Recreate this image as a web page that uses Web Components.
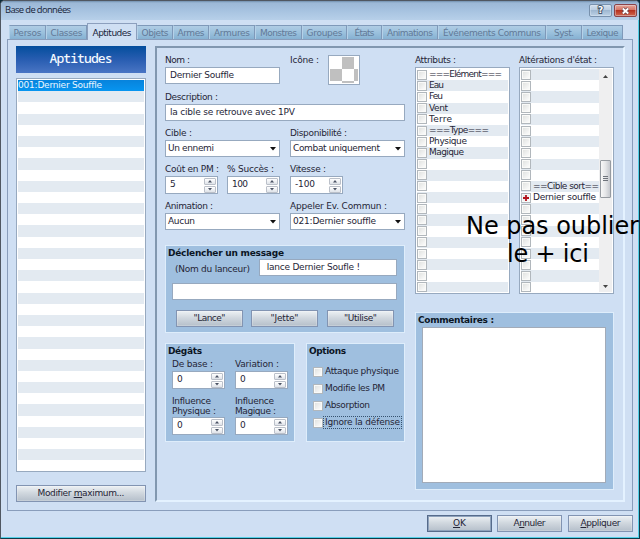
<!DOCTYPE html>
<html lang="fr"><head><meta charset="utf-8"><title>Base de données</title>
<style>
html,body{margin:0;width:640px;height:539px;overflow:hidden;background:#0d2c3b}
body{font:9px "DejaVu Sans",sans-serif;color:#252536}
</style></head><body><db-window></db-window>
<script>
const define=(name,css,html,setup)=>customElements.define(name,class extends HTMLElement{
  connectedCallback(){
    if(this.shadowRoot)return;
    const r=this.attachShadow({mode:'open'});
    r.innerHTML=`<style>*{box-sizing:border-box}:host{display:block;box-sizing:border-box}${css}</style>${typeof html==='function'?html(this):html}`;
    if(setup)setup(this,r);
  }
});
// Text run spaced to a given width.
define('ui-text',`:host{display:inline-block;white-space:pre;flex:none}span{display:inline-block}`,
 e=>`<span>${e.innerHTML}</span>`,(e,r)=>{
  const s=r.querySelector('span'),w=+e.getAttribute('w');
  if(w){const n=e.textContent.length;s.style.letterSpacing=((w-s.getBoundingClientRect().width)/(n-1||1))+'px';
    e.style.width=w+'px';}
});
const T=(t,w)=>`<ui-text w="${w}">${t}</ui-text>`;
define('ui-label',`:host{height:14px;line-height:14px;white-space:nowrap}`,e=>T(e.getAttribute('t'),e.getAttribute('w')));
define('ui-input',`:host{height:17px;border:1px solid #97a9bf;background:#fff;padding-left:4px;line-height:15px;white-space:nowrap;overflow:hidden}`,
 e=>e.hasAttribute('t')?T(e.getAttribute('t'),e.getAttribute('w')):'');
define('ui-select',`:host{display:flex;height:17px;border:1px solid #97a9bf;background:#fff;padding:0 3px 0 2px;justify-content:space-between;align-items:center;line-height:15px}svg{display:block;margin-top:1px}`,
 e=>T(e.getAttribute('t'),e.getAttribute('w'))+'<svg width="6" height="4"><path d="M0 0H6L3 3.5Z" fill="#111"/></svg>');
define('ui-spin',`:host{display:flex;width:53px;height:18px;border:1px solid #97a9bf;background:#fff;padding-left:4px;justify-content:space-between;line-height:15px}
 .b{width:13px;display:grid;grid-template-rows:7px 7px;gap:1px;padding:.5px 1px 0 0}.b i{border:1px solid #bbc0c9;border-radius:1px;background:linear-gradient(#fff,#dfe3e9);display:grid;place-items:center}svg{display:block}`,
 e=>T(e.getAttribute('t'),e.getAttribute('w'))+'<span class="b"><i><svg width="4" height="3"><path d="M2 0L4 2.5H0Z" fill="#4a5264"/></svg></i><i><svg width="4" height="3"><path d="M0 0H4L2 2.5Z" fill="#4a5264"/></svg></i></span>');
define('ui-button',`:host{display:flex;height:17px;align-items:center;justify-content:center;border:1px solid #8294b2;background:linear-gradient(#edf1f4,#d1d8df 45%,#b5bfca);box-shadow:inset 0 0 0 1px #ffffff38;line-height:15px}
 :host([main]){border-color:#566b8b;box-shadow:inset 0 0 0 1px #8ea2bc}`,
 e=>`<ui-text w="${e.getAttribute('w')}">${e.innerHTML}</ui-text>`);
define('ui-check',`:host{display:block;flex:none;width:10px;height:10px;border:1px solid #b1b7bc;background:linear-gradient(135deg,#dddfdd,#fff);box-shadow:inset 0 0 0 1px #fafaf8}svg{display:block}`,
 e=>e.hasAttribute('plus')?'<svg width="8" height="8"><path d="M4 1V7M1 4H7" stroke="#b3131c" stroke-width="1.8"/></svg>':'');
define('ui-field','',e=>`<ui-label t="${e.getAttribute('label')}" w="${e.getAttribute('lw')}"></ui-label><slot></slot>`);
define('ui-group',`:host{background:#9fbfdf;border:1px solid #deedfb;padding:1px 0 0 2px}b{display:block;height:12px;line-height:13px;color:#0b1524;font-weight:bold}`,
 e=>`<b>${T(e.getAttribute('t'),e.getAttribute('w'))}</b><slot></slot>`);
define('ui-list',`:host{display:flex;border:1px solid #97a9bf;background:#fff;padding:1px;overflow:hidden}
 .rows{flex:1;min-width:0;overflow:hidden}.r{height:11.2px;line-height:11px;display:flex;align-items:center;gap:2px;white-space:nowrap;overflow:hidden}
 .odd{background:#e3eaf1}.sel{background:linear-gradient(#0783dc,#0795f0);color:#e9f6ff}`,
 e=>{const k=e.getAttribute('kind'),n=+e.getAttribute('n'),flip=k==='states'?0:1;
  const data={skills:{0:['001:Dernier Souffle',84]},
   attrs:{0:['===Elément===',73],1:['Eau',15],2:['Feu',14],3:['Vent',19],4:['Terre',23],5:['===Type===',60],6:['Physique',38],7:['Magique',35]},
   states:{10:['==Cible sort==',66],11:['Dernier souffle',63]}}[k];
  let s='';for(let i=0;i<n;i++){const d=data[i];
   s+=`<div class="r ${i%2===flip?'odd':''} ${k==='skills'&&i===0?'sel':''}">${k==='skills'?'':`<ui-check ${k==='states'&&i===11?'plus':''}></ui-check>`}${d?T(d[0],d[1]):''}</div>`;}
  return `<div class="rows">${s}</div><slot></slot>`;});
define('ui-scroll',`:host{width:13px;display:flex;flex-direction:column;background:#efeff0;align-items:center}
 svg{display:block;flex:none}.top{margin-top:6px}.thumb{margin-top:82px;width:11px;height:38px;border:1px solid #969ba1;border-radius:1px;background:linear-gradient(90deg,#f8f8f8,#e5e6e8 50%,#c5c8ce);display:grid;place-items:center}
 .end{margin-top:auto;margin-bottom:4px}`,
 '<svg class="top" width="5" height="3"><path d="M2.5 0L5 3H0Z" fill="#444"/></svg><div class="thumb"><svg width="5" height="6"><path d="M0 .5H5M0 2.5H5M0 4.5H5" stroke="#6e737b"/></svg></div><svg class="end" width="5" height="3"><path d="M0 0H5L2.5 3Z" fill="#444"/></svg>');
define('db-title',`:host{height:19px;display:flex;align-items:flex-start;justify-content:space-between;padding:2px 2px 0 4px;background:linear-gradient(#718fae 0,#9cb8d6 10%,#a5c1df 45%,#b7d0e9);font:9.4px "Open Sans","Noto Sans",sans-serif;color:#18243a}
 .n{line-height:14px}.c{display:flex;gap:2px;padding-top:1px}.c i{display:grid;place-items:center;width:23px;height:13px;border:1px solid #7891ad;border-radius:2px;background:linear-gradient(#d2dfed,#b9cce1 48%,#9fb8d1 50%,#bdd1e5);box-shadow:inset 0 0 0 1px #e0ebf566}
 .c .x{border-color:#8a4349;background:linear-gradient(#e7a79b,#d3705f 48%,#b63220 50%,#d2674e)}svg{display:block}.c b{font:bold 9px/11px "DejaVu Sans";color:#fff;-webkit-text-stroke:2px #4b5b6e;paint-order:stroke fill}`,
 `<span class="n">${T('Base de données',66)}</span><div class="c"><i><b>?</b></i><i class="x"><svg width="9" height="8"><path d="M1.8 1.5L7.2 6.5M7.2 1.5L1.8 6.5" stroke="#68444c" stroke-width="3.4"/><path d="M1.8 1.5L7.2 6.5M7.2 1.5L1.8 6.5" stroke="#fff" stroke-width="1.8"/></svg></i></div>`);
define('db-tabs',`:host{display:flex;align-items:flex-end;height:15px;padding-left:2px;color:#627997}
 div{height:14px;border:1px solid #7f99b9;border-left-color:#b5d1e8;border-bottom:0;background:linear-gradient(#b0cce4,#9bc1dd 50%,#86b1d2);display:flex;justify-content:center;line-height:15px;flex:none}
 .a{height:17px;margin-bottom:-1px;background:#cfdff3;color:#18243a;line-height:18px;border-color:#8c9fbd;z-index:1}`,
 [['Persos',28,37],['Classes',32,41],['Aptitudes',39,50],['Objets',27,36],['Armes',27,36],['Armures',36,46],['Monstres',37,47],['Groupes',36,45],['États',20,35],['Animations',46,56],['Événements Communs',98,108],['Syst.',20,36],['Lexique',32,41]].map((x,i)=>`<div class="${i===2?'a':''}" style="width:${x[2]}px">${T(x[0],x[1])}</div>`).join(''));
define('db-icon',`:host{width:32px;height:30px;border:1px solid #97a9bf;background:#fff;padding:1px}svg{display:block}`,
 '<svg width="28" height="26"><path d="M12 0H24V12H12ZM0 12H12V24H0ZM24 12H28V24H24ZM12 24H24V26H12Z" fill="#c0c0c0"/></svg>');
define('db-form',`.f{display:grid;grid-template-rows:37px 36px 36px 37px 46px}.row{display:grid;grid-template-columns:115px 115px;gap:10px;align-items:start}.spins{grid-template-columns:52px 53px 53px}
 .icon{display:flex;gap:9px}.icon db-icon{margin-top:2px}
 .m{height:88px}.who{display:flex;align-items:flex-start;height:22px;padding:0 0 0 7px}.who ui-label{height:20px;line-height:20px;width:84px}.who ui-input{width:138px}
 .m>ui-input{margin:3px 7px 0 4px}.btns{display:flex;gap:8px;padding:10px 0 0 8px}.btns>*{width:67px}
 .low{display:grid;grid-template-columns:130px 99px;gap:11px;margin-top:10px}.low>*{height:99px}
 .d{display:grid;grid-template-columns:53px 53px;gap:5px 10px;padding:0 4px}
 .infl{display:flex;flex-direction:column;padding-top:2px}.infl ui-label{height:10px;line-height:10px}.infl ui-spin{margin-top:1px}
 .o{display:grid;grid-auto-rows:17px;padding:6px 0 0 4px}.o div{display:flex;align-items:center}.o span{padding:0 1px;line-height:11px;border:1px dotted transparent}.o span.foc{border-color:#35526f;margin-right:1px}`,
 `<div class="f">
 <div class="row"><ui-field label="Nom :" lw="25"><ui-input t="Dernier Souffle" w="64"></ui-input></ui-field><div class="icon"><ui-label t="Icône :" w="29"></ui-label><db-icon></db-icon></div></div>
 <ui-field label="Description :" lw="53"><ui-input t="la cible se retrouve avec 1PV" w="125"></ui-input></ui-field>
 <div class="row"><ui-field label="Cible :" lw="27"><ui-select t="Un ennemi" w="46"></ui-select></ui-field><ui-field label="Disponibilité :" lw="57"><ui-select t="Combat uniquement" w="87"></ui-select></ui-field></div>
 <div class="row spins"><ui-field label="Coût en PM :" lw="54"><ui-spin t="5" w="6"></ui-spin></ui-field><ui-field label="% Succès :" lw="47"><ui-spin t="100" w="16"></ui-spin></ui-field><ui-field label="Vitesse :" lw="36"><ui-spin t="-100" w="20"></ui-spin></ui-field></div>
 <div class="row"><ui-field label="Animation :" lw="48"><ui-select t="Aucun" w="27"></ui-select></ui-field><ui-field label="Appeler Ev. Commun :" lw="97"><ui-select t="021:Dernier souffle" w="83"></ui-select></ui-field></div></div>
 <ui-group class="m" t="Déclencher un message" w="116"><div class="who"><ui-label t="(Nom du lanceur)" w="75"></ui-label><ui-input t=" lance Dernier Soufle !" w="96"></ui-input></div><ui-input style="margin:2px 7px 0 4px"></ui-input>
 <div class="btns"><ui-button w="32">"Lance"</ui-button><ui-button w="28">"Jette"</ui-button><ui-button w="33" style="margin-left:1px">"Utilise"</ui-button></div></ui-group>
 <div class="low"><ui-group t="Dégâts" w="34"><div class="d"><ui-field label="De base :" lw="41"><ui-spin t="0" w="6"></ui-spin></ui-field><ui-field label="Variation :" lw="44"><ui-spin t="0" w="6"></ui-spin></ui-field>
 <div class="infl"><ui-label t="Influence" w="39"></ui-label><ui-label t="Physique :" w="44"></ui-label><ui-spin t="0" w="6"></ui-spin></div><div class="infl"><ui-label t="Influence" w="39"></ui-label><ui-label t="Magique :" w="41"></ui-label><ui-spin t="0" w="6"></ui-spin></div></div></ui-group>
 <ui-group t="Options" w="37"><div class="o">${[['Attaque physique',74],['Modifie les PM',60],['Absorption',45],['Ignore la défense',75]].map((x,i)=>`<div><ui-check></ui-check><span class="${i===3?'foc':''}">${T(x[0],x[1])}</span></div>`).join('')}</div></ui-group></div>`);
define('db-right',`.lists{display:grid;grid-template-columns:95px 95px;gap:9px}.lists ui-list{height:227px}
 .com{height:178px;margin-top:18px}.ta{width:184px;height:156px;border:1px solid #a2abb8;background:#fff;margin:1px 0 0 4px}`,
 `<div class="lists"><ui-field label="Attributs :" lw="41"><ui-list kind="attrs" n="20"></ui-list></ui-field><ui-field label="Altérations d'état :" lw="78"><ui-list kind="states" n="20"><ui-scroll></ui-scroll></ui-list></ui-field></div><ui-group class="com" t="Commentaires :" w="76"><div class="ta"></div></ui-group>`);
define('db-window',`:host{position:relative;width:640px;height:539px;background:#cfdff3;border:1px solid #505761;border-right-color:#123a49;border-bottom-color:#0f3b48;border-radius:5px 5px 0 0;overflow:hidden;box-shadow:inset -1px -1px #54d0e8}
 .main{margin:4px 6px 0}.page{height:472px;border:1px solid #899dbb;padding:6px 8px 8px;display:grid;grid-template-columns:131px 470px;column-gap:8px}
 .left h1{margin:0;width:130px;height:27px;background:linear-gradient(#034e9d,#285db1 50%,#4a75c4);color:#f4faff;font:500 13px/25px "Noto Sans Mono","DejaVu Sans Mono",monospace;display:flex;justify-content:center}
 .left ui-list{width:130px;height:394px;margin-top:5px}.left ui-button{margin-top:13px;width:130px}
 .in{height:456px;border:2px solid #8197af;border-right-color:#e4f2ff;border-bottom-color:#e4f2ff;padding:5px 0 0 8px;display:grid;grid-template-columns:240px 199px;gap:10px}
 footer{display:flex;justify-content:flex-end;gap:5px;padding:4px 6px 0 0}footer ui-button{width:65px}
 footer ui-button:last-child{margin-left:1px}
 .note{position:absolute;left:465px;top:211px;font:24px/28px "DejaVu Sans",sans-serif;color:#000;display:grid;gap:0}.note ui-text+ui-text{margin-left:41px}`,
 `<db-title></db-title><div class="main"><db-tabs></db-tabs><div class="page"><div class="left"><h1>${T('Aptitudes',63)}</h1><ui-list kind="skills" n="35"></ui-list><ui-button w="87">Modifier <u>m</u>aximum...</ui-button></div><div class="in"><db-form></db-form><db-right></db-right></div></div></div>
 <footer><ui-button main w="13"><u>O</u>K</ui-button><ui-button w="32">A<u>n</u>nuler</ui-button><ui-button w="40"><u>A</u>ppliquer</ui-button></footer>
 <div class="note">${T('Ne pas oublier',173)}${T('le + ici',82)}</div>`);
</script></body></html>
